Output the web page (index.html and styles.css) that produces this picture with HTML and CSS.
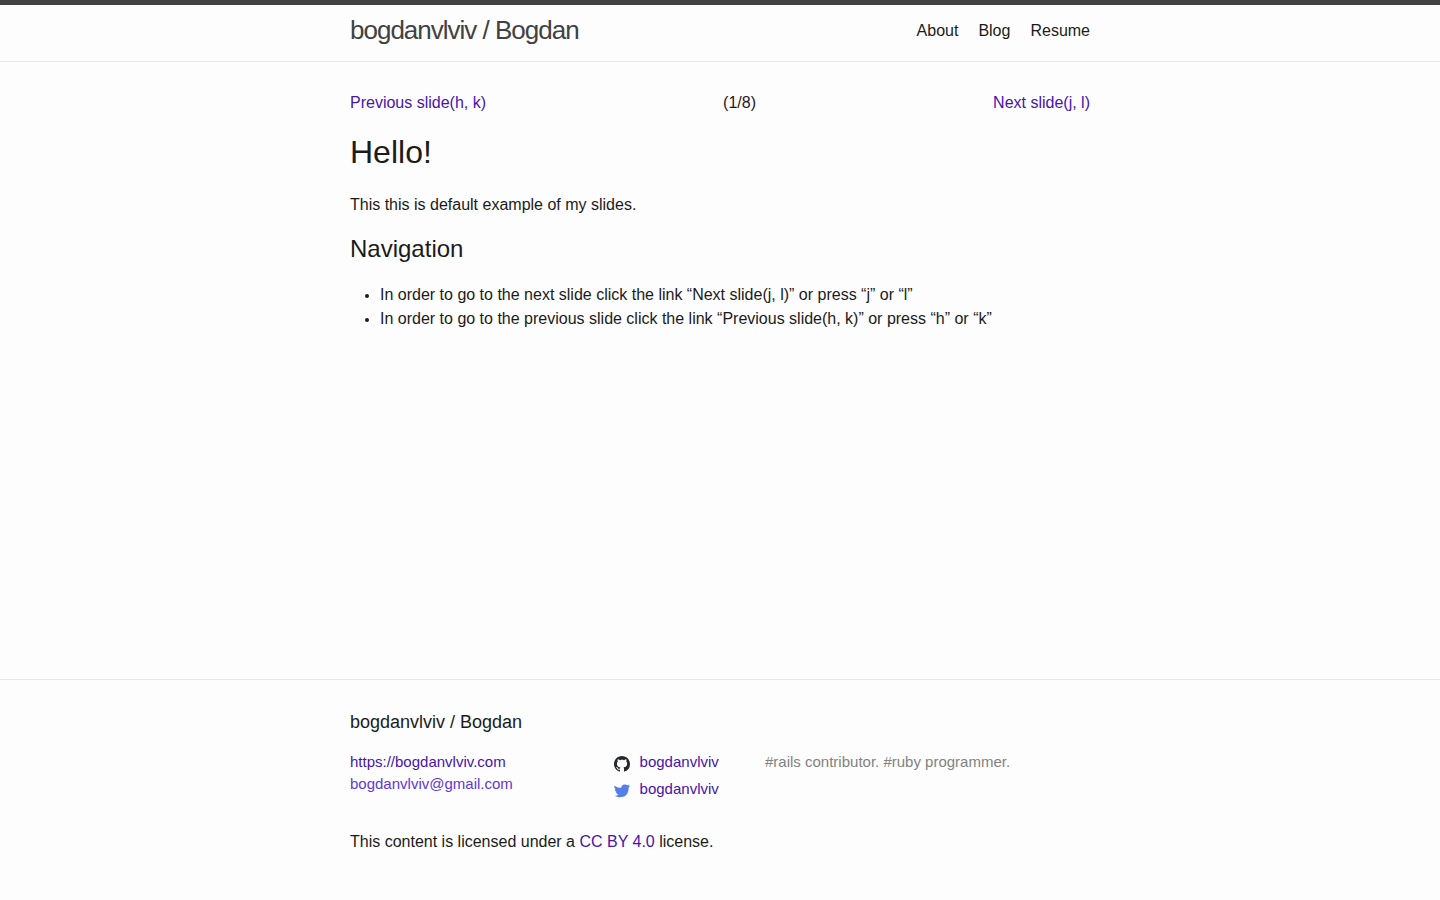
FILE: index.html
```html
<!DOCTYPE html>
<html lang="en">
<head>
<meta charset="utf-8">
<title>Hello!</title>
<link rel="stylesheet" href="styles.css">
</head>
<body>
<header class="site-header">
  <div class="wrapper header-row">
    <a class="site-title" href="#">bogdanvlviv / Bogdan</a>
    <nav class="site-nav"><a href="#">About</a><a href="#">Blog</a><a href="#">Resume</a></nav>
  </div>
</header>
<main class="page-content">
  <div class="wrapper">
    <div class="slide-nav"><a href="#">Previous slide(h, k)</a><span>(1/8)</span><a href="#">Next slide(j, l)</a></div>
    <h1>Hello!</h1>
    <p>This this is default example of my slides.</p>
    <h2>Navigation</h2>
    <ul>
      <li>In order to go to the next slide click the link “Next slide(j, l)” or press “j” or “l”</li>
      <li>In order to go to the previous slide click the link “Previous slide(h, k)” or press “h” or “k”</li>
    </ul>
  </div>
</main>
<footer class="site-footer">
  <div class="wrapper">
    <h2 class="footer-heading">bogdanvlviv / Bogdan</h2>
    <div class="footer-cols">
      <div class="col-contact"><a href="#">https://bogdanvlviv.com</a><a class="email" href="#">bogdanvlviv@gmail.com</a></div>
      <div class="col-social">
        <a href="#"><svg class="icon github" viewBox="0 0 16 16"><path d="M8 0C3.58 0 0 3.58 0 8c0 3.54 2.29 6.53 5.47 7.59.4.07.55-.17.55-.38 0-.19-.01-.82-.01-1.49-2.01.37-2.53-.49-2.69-.94-.09-.23-.48-.94-.82-1.13-.28-.15-.68-.52-.01-.53.63-.01 1.08.58 1.23.82.72 1.21 1.87.87 2.33.66.07-.52.28-.87.51-1.07-1.78-.2-3.64-.89-3.64-3.95 0-.87.31-1.59.82-2.15-.08-.2-.36-1.02.08-2.12 0 0 .67-.21 2.2.82.64-.18 1.32-.27 2-.27s1.36.09 2 .27c1.53-1.04 2.2-.82 2.2-.82.44 1.1.16 1.92.08 2.12.51.56.82 1.27.82 2.15 0 3.07-1.87 3.75-3.65 3.95.29.25.54.73.54 1.48 0 1.07-.01 1.93-.01 2.2 0 .21.15.46.55.38A8.01 8.01 0 0 0 16 8c0-4.42-3.58-8-8-8z"/></svg><span>bogdanvlviv</span></a>
        <a href="#"><svg class="icon twitter" viewBox="0 0 16 16"><path d="M.4 2.400C2.200 3.900 4.400 4.700 7.200 4.700C7.300 2.800 8.700 1.700 10.500 1.500c1.200-.2 2.200.1 2.900.8.800-.3 1.500-.6 2.100-1.100-.1.800-.4 1.400-1 1.900.5 0 1-.1 1.500-.3-.3.800-.8 1.400-1.500 1.900.4 5.300-2.400 8.700-6.600 9.400-2.400.4-4.600.1-7.100-1.300 1.500-.1 2.800-.5 3.700-1.300-1.300-.2-2.200-.9-2.700-2.200.4.100.8.100 1.200-.1C1.700 8.700.8 7.700.6 6.300c.4.200.9.300 1.300.200C.600 5.500.1 4 .4 2.400z"/></svg><span>bogdanvlviv</span></a>
      </div>
      <p class="about">#rails contributor. #ruby programmer.</p>
    </div>
    <p class="license">This content is licensed under a <a href="#">CC BY 4.0</a> license.</p>
  </div>
</footer>
</body>
</html>
```
FILE: styles.css
```css
* { box-sizing: border-box; }
body, h1, h2, p, ul { margin: 0; padding: 0; }
body { min-height: 900px; display: flex; flex-direction: column; font: 400 16px/24px "Liberation Sans", Arial, sans-serif; color: #1b1b1b; background: #fdfdfd; }
a { color: #4714ae; text-decoration: none; }
.wrapper { width: 740px; margin: 0 auto; }
.site-header { height: 62px; border-top: 5px solid #424242; border-bottom: 1px solid #e8e8e8; }
.header-row { display: flex; justify-content: space-between; }
.site-title { font-size: 26px; line-height: 51px; letter-spacing: -1px; color: #424242; }
.site-nav { display: flex; gap: 20px; line-height: 51px; }
.site-nav a { color: #1b1b1b; }
.page-content { flex: 1; padding-top: 29px; }
.slide-nav { display: flex; justify-content: space-between; margin-bottom: 13px; }
h1, h2 { font-weight: 400; }
h1 { font-size: 32px; line-height: 48px; margin-bottom: 17px; }
h2 { font-size: 24px; line-height: 36px; }
p + h2 { margin: 14px 0 16px; }
ul { padding-left: 30px; }
li::marker { font-size: 14px; }
.site-footer { height: 221px; border-top: 1px solid #e8e8e8; padding-top: 29px; }
.footer-heading { font-size: 18px; line-height: 27px; margin-bottom: 15px; }
.footer-cols { display: flex; font-size: 15px; line-height: 22px; }
.col-contact { display: flex; flex-direction: column; width: 264px; }
.col-contact .email { color: #6137dc; }
.col-social { width: 151px; }
.col-social a { display: flex; gap: 9.6px; height: 27px; }
.icon { width: 16px; height: 16px; margin-top: 5px; }
.github { fill: #24292e; }
.twitter { fill: #557eea; }
.about { color: #828282; }
.license { margin-top: 25px; }
```
